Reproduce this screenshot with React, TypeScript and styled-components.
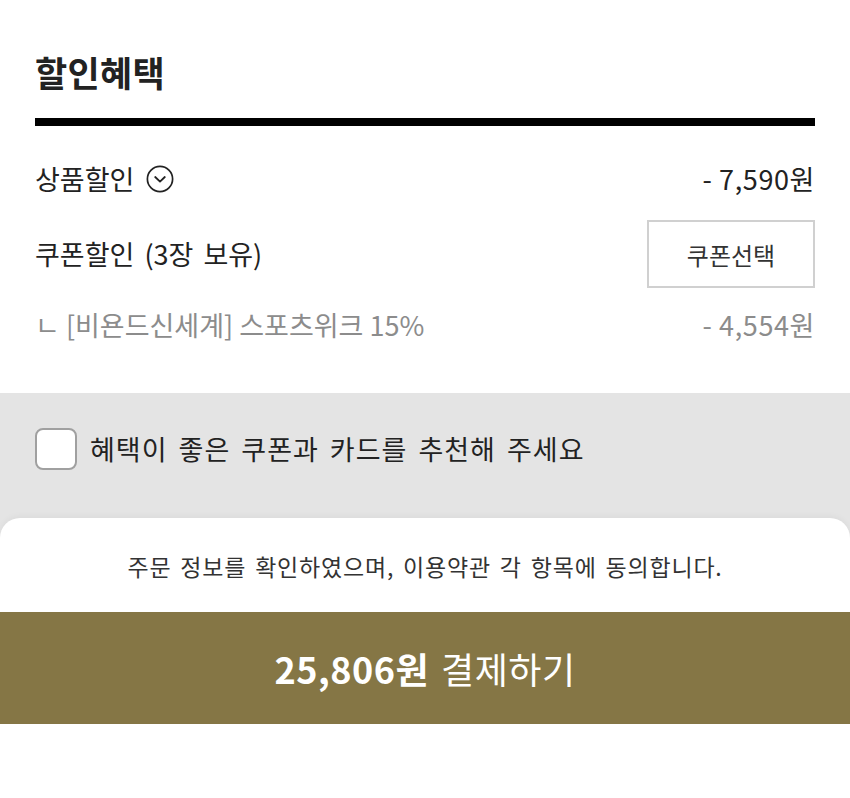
import React from 'react';
import styled, { createGlobalStyle } from 'styled-components';

const GlobalStyle = createGlobalStyle`
  html, body {
    margin: 0;
    padding: 0;
    background: #fff;
  }
  body {
    font-family: "Noto Sans CJK KR", "Noto Sans", sans-serif;
    color: #222;
  }
`;

const Page = styled.div`
  width: 850px;
  background: #fff;
`;

const Section = styled.section`
  padding: 0 35px;
`;

const Title = styled.h2`
  margin: 50px 0 24px;
  font-size: 35px;
  line-height: 44px;
  font-weight: 700;
  color: #222;
  letter-spacing: 0.3px;
`;

const ThickRule = styled.div`
  height: 8px;
  background: #000;
`;

const RowList = styled.div`
  display: flex;
  flex-direction: column;
  padding: 36px 0 51px;
`;

const Row = styled.div<{ $gap?: number; $height?: number; $muted?: boolean }>`
  display: flex;
  align-items: center;
  justify-content: space-between;
  margin-top: ${(p) => p.$gap ?? 0}px;
  min-height: ${(p) => p.$height ?? 34}px;
  font-size: 27px;
  line-height: 34px;
  color: ${(p) => (p.$muted ? '#8c8c8c' : '#222')};
`;

const Label = styled.div<{ $wide?: boolean }>`
  display: flex;
  align-items: center;
  gap: 12px;
  word-spacing: ${(p) => (p.$wide ? 4 : 0)}px;
`;

const Amount = styled.span`
  letter-spacing: 0.6px;
`;

const CouponButton = styled.button`
  width: 168px;
  height: 68px;
  border: 2px solid #d0d0d0;
  background: #fff;
  font-family: inherit;
  font-size: 24px;
  color: #333;
  cursor: pointer;
`;

const Tray = styled.div`
  background: #e4e4e4;
`;

const RecommendBar = styled.label`
  display: flex;
  align-items: center;
  gap: 13px;
  padding: 35px 35px 48px;
  font-size: 27px;
  line-height: 42px;
  letter-spacing: 1px;
  word-spacing: 4px;
  color: #222;
`;

const CheckBox = styled.span`
  width: 42px;
  height: 42px;
  box-sizing: border-box;
  border: 2px solid #a0a0a0;
  border-radius: 8px;
  background: #fff;
  flex-shrink: 0;
`;

const Sheet = styled.div`
  background: #fff;
  border-radius: 20px 20px 0 0;
  box-shadow: 0 -2px 6px rgba(0, 0, 0, 0.04);
  padding-top: 32px;
  padding-bottom: 72px;
`;

const Agreement = styled.p`
  margin: 0 0 30px;
  text-align: center;
  font-size: 23px;
  line-height: 32px;
  letter-spacing: 0.8px;
  word-spacing: 3px;
  color: #333;
`;

const PayButton = styled.button`
  display: flex;
  align-items: center;
  justify-content: center;
  gap: 12px;
  width: 100%;
  height: 112px;
  border: none;
  background: #857645;
  color: #fff;
  font-family: inherit;
  font-size: 36px;
  letter-spacing: 0.5px;
  cursor: pointer;
`;

const PayAmount = styled.strong`
  font-weight: 700;
`;

function ChevronCircle() {
  return (
    <svg width="28" height="28" viewBox="0 0 28 28" fill="none">
      <circle cx="14" cy="14" r="12.6" stroke="#222" strokeWidth="1.7" />
      <path d="M9.2 12 L14 16.6 L18.8 12" stroke="#222" strokeWidth="1.8" strokeLinecap="round" strokeLinejoin="round" />
    </svg>
  );
}

export default function App() {
  return (
    <Page>
      <GlobalStyle />
      <Section>
        <Title>할인혜택</Title>
        <ThickRule />
        <RowList>
          <Row>
            <Label>
              상품할인
              <ChevronCircle />
            </Label>
            <Amount>- 7,590원</Amount>
          </Row>
          <Row $gap={24} $height={68}>
            <Label $wide>쿠폰할인 (3장 보유)</Label>
            <CouponButton>쿠폰선택</CouponButton>
          </Row>
          <Row $gap={20} $muted>
            <Label>ㄴ [비욘드신세계] 스포츠위크 15%</Label>
            <Amount>- 4,554원</Amount>
          </Row>
        </RowList>
      </Section>
      <Tray>
        <RecommendBar>
          <CheckBox />
          혜택이 좋은 쿠폰과 카드를 추천해 주세요
        </RecommendBar>
        <Sheet>
          <Agreement>주문 정보를 확인하였으며, 이용약관 각 항목에 동의합니다.</Agreement>
          <PayButton>
            <PayAmount>25,806원</PayAmount>
            결제하기
          </PayButton>
        </Sheet>
      </Tray>
    </Page>
  );
}
